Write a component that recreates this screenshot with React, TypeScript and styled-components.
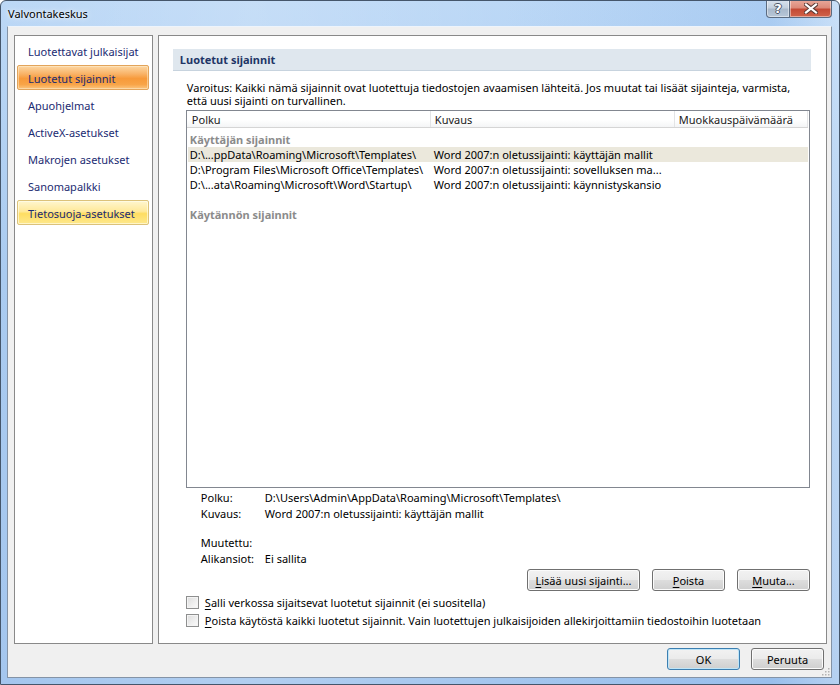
import React from "react";
import styled, { createGlobalStyle, css } from "styled-components";

const FONT = `"Noto Sans", "Liberation Sans", sans-serif`;

const GlobalStyle = createGlobalStyle`
  html, body { margin: 0; padding: 0; background: #fff; overflow: hidden; }
  * { box-sizing: border-box; }
  body { font-family: ${FONT}; font-size: 11px; color: #000; }
`;

const Window = styled.div`
  position: relative;
  width: 840px;
  height: 685px;
  display: flex;
  flex-direction: column;
  border: 1px solid #45566b;
  border-radius: 6px 6px 0 0;
  background:
    linear-gradient(90deg, rgba(255,255,255,0.0) 0%, rgba(255,255,255,0.15) 30%, rgba(255,255,255,0) 60%, rgba(120,170,230,0.25) 92%, rgba(255,255,255,0.2) 100%),
    linear-gradient(180deg, #bcd8f6 0%, #aacbf0 40%, #a4c6ee 100%);
  overflow: hidden;
`;

const TitleBar = styled.div`
  height: 25px;
  flex: none;
  display: flex;
  align-items: flex-start;
  justify-content: space-between;
  padding-left: 7px;
`;

const TitleText = styled.div`
  font-size: 11px;
  line-height: 14px;
  margin-top: 6px;
  color: #000;
  text-shadow: 0 0 6px rgba(255,255,255,0.9), 0 0 3px rgba(255,255,255,0.9);
`;

const CaptionButtons = styled.div`
  display: flex;
  margin-right: 7px;
  margin-top: -1px;
`;

const CaptionButton = styled.div<{ $close?: boolean }>`
  height: 18px;
  width: ${(p) => (p.$close ? "42px" : "24px")};
  display: flex;
  align-items: center;
  justify-content: center;
  border: 1px solid #5b6b80;
  border-top: none;
  ${(p) =>
    p.$close
      ? css`
          border-radius: 0 0 4px 0;
          border-left: none;
          background: linear-gradient(180deg, #e9a99b 0%, #dc8a79 45%, #c44a35 55%, #d0634a 100%);
        `
      : css`
          border-radius: 0 0 0 4px;
          background: linear-gradient(180deg, #d9e3ee 0%, #c3d0de 45%, #a9b9cb 55%, #b8c7d8 100%);
        `}
  box-shadow: inset 0 0 0 1px rgba(255,255,255,0.45);
`;

const QuestionGlyph = styled.span`
  font-family: "DejaVu Sans", sans-serif;
  font-weight: bold;
  font-size: 13px;
  line-height: 13px;
  color: #fff;
  text-shadow: -1px 0 #4a5566, 1px 0 #4a5566, 0 -1px #4a5566, 0 1px #4a5566;
`;

const Client = styled.div`
  position: relative;
  flex: 1;
  margin: 0 7px 7px 6px;
  display: flex;
  flex-direction: column;
  background: #f0f0f0;
  border: 1px solid #8493a6;
  border-top-color: #eef4fb;
  padding: 8px 7px 7px 6px;
`;

const Main = styled.div`
  height: 609px;
  flex: none;
  display: flex;
  gap: 5px;
  margin-right: -3px;
`;

const NavPanel = styled.div`
  width: 139px;
  background: #fff;
  border: 1px solid #898989;
  padding: 2px 3px 0 2px;
  display: flex;
  flex-direction: column;
  gap: 2px;
`;

const NavItem = styled.div<{ $state?: "selected" | "hover" }>`
  height: 25px;
  flex: none;
  display: flex;
  align-items: center;
  padding-left: 10px;
  padding-top: 1px;
  font-size: 11px;
  color: #1b2b72;
  border: 1px solid transparent;
  border-radius: 2px;
  white-space: nowrap;
  ${(p) =>
    p.$state === "selected" &&
    css`
      border-color: #e2a45b;
      background: linear-gradient(180deg, #fcd7a3 0%, #f9b266 35%, #f79a3a 55%, #f8a447 80%, #fbc57f 100%);
      box-shadow: inset 0 0 0 1px rgba(255, 240, 210, 0.5);
    `}
  ${(p) =>
    p.$state === "hover" &&
    css`
      border-color: #dcc27a;
      background: linear-gradient(180deg, #fff6cf 0%, #ffe99a 45%, #fedd62 55%, #fee88c 100%);
      box-shadow: inset 0 0 0 1px rgba(255, 255, 240, 0.6);
    `}
`;

const ContentPanel = styled.div`
  width: 670px;
  background: #fff;
  border: 1px solid #898989;
  padding: 13px 15px 0 14px;
  display: flex;
  flex-direction: column;
`;

const SectionHeader = styled.div`
  height: 22px;
  flex: none;
  background: #dfe7ee;
  border-bottom: 1px solid #c7d3de;
  padding-left: 7px;
  display: flex;
  align-items: center;
  font-weight: bold;
  font-size: 11px;
  color: #1e3566;
`;

const Body = styled.div`
  padding-left: 13px;
  padding-right: 1px;
  display: flex;
  flex-direction: column;
`;

const Warning = styled.div`
  margin: 10px 0 3px 1px;
  display: flex;
  flex-direction: column;
`;

const WarningLine = styled.span`
  height: 13px;
  line-height: 13px;
  white-space: nowrap;
`;

const Table = styled.div`
  height: 378px;
  flex: none;
  border: 1px solid #828790;
  display: flex;
  flex-direction: column;
`;

const HeaderRow = styled.div`
  height: 17px;
  flex: none;
  display: grid;
  grid-template-columns: 244px 244px 1fr;
  background: linear-gradient(180deg, #ffffff 0%, #ffffff 55%, #f4f5f6 100%);
  border-bottom: 1px solid #d5d5d5;
  margin-right: 1px;
`;

const HeaderCell = styled.div<{ $pad: number }>`
  padding-left: ${(p) => p.$pad}px;
  display: flex;
  align-items: center;
  border-right: 1px solid #e3e4e6;
  white-space: nowrap;
  color: #1a1a1a;
`;

const Rows = styled.div`
  padding: 4px 1px 0 1px;
  display: flex;
  flex-direction: column;
`;

const GroupLabel = styled.div<{ $gapTop?: number }>`
  height: 15px;
  line-height: 15px;
  padding-left: 2px;
  margin-top: ${(p) => p.$gapTop ?? 0}px;
  font-weight: bold;
  color: #8b8b8b;
`;

const DataRow = styled.div<{ $selected?: boolean }>`
  height: 15px;
  line-height: 15px;
  display: grid;
  grid-template-columns: 244px 1fr;
  background: ${(p) => (p.$selected ? "#ebe8dc" : "transparent")};
  white-space: nowrap;
`;

const DataCell = styled.div`
  padding-left: 2px;
  overflow: hidden;
`;

const Details = styled.div`
  margin-top: 2px;
  padding-left: 15px;
  display: grid;
  grid-template-columns: 64px 1fr;
  grid-template-rows: 16px 16px 13px 16px 16px;
  line-height: 16px;
  white-space: nowrap;
`;

const Spacer = styled.div`
  grid-column: 1 / -1;
`;

const ActionRow = styled.div`
  display: flex;
  justify-content: flex-end;
  gap: 12px;
  margin-top: 2px;
`;

const Button = styled.div<{ $w: number; $default?: boolean }>`
  width: ${(p) => p.$w}px;
  height: 22px;
  flex: none;
  display: flex;
  align-items: center;
  justify-content: center;
  border: 1px solid ${(p) => (p.$default ? "#3c7fb1" : "#707070")};
  border-radius: 3px;
  background: linear-gradient(180deg, #f2f2f2 0%, #ebebeb 48%, #dddddd 52%, #cfcfcf 100%);
  box-shadow: inset 0 0 0 1px ${(p) => (p.$default ? "#bfe5f8" : "#fbfbfb")};
  color: #000;
  white-space: nowrap;
  u { text-decoration: underline; text-underline-offset: 2px; }
`;

const CheckList = styled.div`
  margin-top: 2px;
  display: flex;
  flex-direction: column;
`;

const CheckRow = styled.label`
  height: 18px;
  display: flex;
  align-items: center;
  gap: 6px;
  white-space: nowrap;
  u { text-decoration: underline; text-underline-offset: 2px; }
`;

const CheckBox = styled.span`
  width: 13px;
  height: 13px;
  border: 1px solid #8e8f8f;
  background: linear-gradient(135deg, #dcdcdc 0%, #f0f0f0 60%, #fbfbfb 100%);
  box-shadow: inset 0 0 0 1px #f4f4f4;
  flex: none;
`;

const Footer = styled.div`
  display: flex;
  justify-content: flex-end;
  gap: 11px;
  margin-top: 4px;
`;

const Grip = styled.svg`
  position: absolute;
  right: 1px;
  bottom: 1px;
`;

export default function App() {
  return (
    <>
      <GlobalStyle />
      <Window>
        <TitleBar>
          <TitleText>Valvontakeskus</TitleText>
          <CaptionButtons>
            <CaptionButton>
              <QuestionGlyph>?</QuestionGlyph>
            </CaptionButton>
            <CaptionButton $close>
              <svg width="14" height="11" viewBox="0 0 14 11">
                <path d="M2 1.5 L12 9.5 M12 1.5 L2 9.5" stroke="#5a3a35" strokeWidth="4.2" strokeLinecap="square" />
                <path d="M2 1.5 L12 9.5 M12 1.5 L2 9.5" stroke="#ffffff" strokeWidth="2.2" strokeLinecap="square" />
              </svg>
            </CaptionButton>
          </CaptionButtons>
        </TitleBar>
        <Client>
          <Main>
            <NavPanel>
              <NavItem>Luotettavat julkaisijat</NavItem>
              <NavItem $state="selected">Luotetut sijainnit</NavItem>
              <NavItem>Apuohjelmat</NavItem>
              <NavItem>ActiveX-asetukset</NavItem>
              <NavItem>Makrojen asetukset</NavItem>
              <NavItem>Sanomapalkki</NavItem>
              <NavItem $state="hover">Tietosuoja-asetukset</NavItem>
            </NavPanel>
            <ContentPanel>
              <SectionHeader>Luotetut sijainnit</SectionHeader>
              <Body>
                <Warning>
                  <WarningLine>
                    Varoitus: Kaikki nämä sijainnit ovat luotettuja tiedostojen avaamisen lähteitä. Jos muutat tai lisäät sijainteja, varmista,
                  </WarningLine>
                  <WarningLine>että uusi sijainti on turvallinen.</WarningLine>
                </Warning>
                <Table>
                  <HeaderRow>
                    <HeaderCell $pad={5}>Polku</HeaderCell>
                    <HeaderCell $pad={4}>Kuvaus</HeaderCell>
                    <HeaderCell $pad={4}>Muokkauspäivämäärä</HeaderCell>
                  </HeaderRow>
                  <Rows>
                    <GroupLabel>Käyttäjän sijainnit</GroupLabel>
                    <DataRow $selected>
                      <DataCell>D:\...ppData\Roaming\Microsoft\Templates\</DataCell>
                      <DataCell>Word 2007:n oletussijainti: käyttäjän mallit</DataCell>
                    </DataRow>
                    <DataRow>
                      <DataCell>D:\Program Files\Microsoft Office\Templates\</DataCell>
                      <DataCell>Word 2007:n oletussijainti: sovelluksen ma...</DataCell>
                    </DataRow>
                    <DataRow>
                      <DataCell>D:\...ata\Roaming\Microsoft\Word\Startup\</DataCell>
                      <DataCell>Word 2007:n oletussijainti: käynnistyskansio</DataCell>
                    </DataRow>
                    <GroupLabel $gapTop={15}>Käytännön sijainnit</GroupLabel>
                  </Rows>
                </Table>
                <Details>
                  <span>Polku:</span>
                  <span>D:\Users\Admin\AppData\Roaming\Microsoft\Templates\</span>
                  <span>Kuvaus:</span>
                  <span>Word 2007:n oletussijainti: käyttäjän mallit</span>
                  <Spacer />
                  <span>Muutettu:</span>
                  <span></span>
                  <span>Alikansiot:</span>
                  <span>Ei sallita</span>
                </Details>
                <ActionRow>
                  <Button $w={113}>
                    <span><u>L</u>isää uusi sijainti...</span>
                  </Button>
                  <Button $w={73}>
                    <span><u>P</u>oista</span>
                  </Button>
                  <Button $w={73}>
                    <span><u>M</u>uuta...</span>
                  </Button>
                </ActionRow>
                <CheckList>
                  <CheckRow>
                    <CheckBox />
                    <span><u>S</u>alli verkossa sijaitsevat luotetut sijainnit (ei suositella)</span>
                  </CheckRow>
                  <CheckRow>
                    <CheckBox />
                    <span><u>P</u>oista käytöstä kaikki luotetut sijainnit. Vain luotettujen julkaisijoiden allekirjoittamiin tiedostoihin luotetaan</span>
                  </CheckRow>
                </CheckList>
              </Body>
            </ContentPanel>
          </Main>
          <Footer>
            <Button $w={73} $default>OK</Button>
            <Button $w={73}>Peruuta</Button>
          </Footer>
          <Grip width="10" height="10" viewBox="0 0 10 10">
            {[
              [8, 2], [8, 5], [5, 5], [8, 8], [5, 8], [2, 8],
            ].map(([x, y], i) => (
              <rect key={i} x={x} y={y} width="1.5" height="1.5" fill="#b3b3b3" />
            ))}
          </Grip>
        </Client>
      </Window>
    </>
  );
}
